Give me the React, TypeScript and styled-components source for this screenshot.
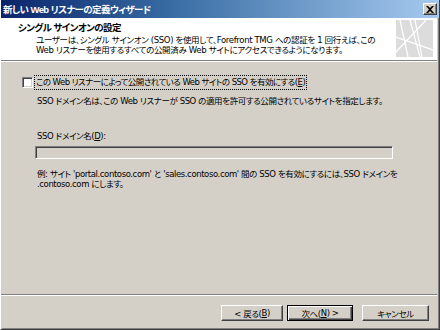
import React from 'react';
import styled, { createGlobalStyle } from 'styled-components';

const GlobalStyle = createGlobalStyle`
  html, body {
    margin: 0;
    padding: 0;
    background: #d4d0c8;
  }
  body {
    font-family: "DejaVu Sans", "Noto Sans CJK JP", sans-serif;
    font-size: 8.5px;
    letter-spacing: -0.4px;
    color: #000;
    font-feature-settings: "palt";
    white-space: nowrap;
  }
`;

const Window = styled.div`
  width: 440px;
  height: 330px;
  box-sizing: border-box;
  display: flex;
  flex-direction: column;
  background: #d4d0c8;
  border-left: 1px solid #fff;
  border-right: 1px solid #404040;
  border-bottom: 1px solid #404040;
  box-shadow: inset 1px 0 0 #d4d0c8, inset -1px -1px 0 #808080;
  overflow: hidden;
`;

const TitleBar = styled.div`
  height: 18px;
  flex: 0 0 18px;
  margin-left: -1px;
  margin-right: -1px;
  display: flex;
  align-items: center;
  justify-content: space-between;
  padding: 0 3px 0 3px;
  background: linear-gradient(to right, #0a246a 0%, #3a6ea5 40%, #a6caf0 100%);
`;

const TitleText = styled.span`
  color: #fff;
  font-family: "Liberation Sans", "Noto Sans CJK JP", sans-serif;
  font-weight: bold;
  font-size: 9.5px;
  letter-spacing: -0.6px;
`;

const CloseButton = styled.div`
  width: 14px;
  height: 12px;
  box-sizing: border-box;
  background: #d4d0c8;
  border-top: 1px solid #fff;
  border-left: 1px solid #fff;
  border-right: 1px solid #404040;
  border-bottom: 1px solid #404040;
  box-shadow: inset -1px -1px 0 #808080;
  display: flex;
  align-items: center;
  justify-content: center;
`;

const Header = styled.div`
  height: 42px;
  flex: 0 0 42px;
  background: #fff;
  display: flex;
  align-items: flex-start;
  justify-content: space-between;
  padding: 0 4px 0 17px;
  margin-right: 2px;
  border-bottom: 1px solid #808080;
  box-shadow: 0 1px 0 #fff;
`;

const HeaderText = styled.div`
  padding-top: 4px;
`;

const HeaderTitle = styled.div`
  font-family: "Liberation Sans", "Noto Sans CJK JP", sans-serif;
  font-weight: bold;
  font-size: 9.5px;
  letter-spacing: -0.6px;
  line-height: 11px;
`;

const HeaderDesc = styled.div`
  padding-left: 18px;
  line-height: 10px;
  margin-top: 2px;
  letter-spacing: -0.35px;
`;

const HeaderIcon = styled.svg`
  margin-top: 2px;
  flex: 0 0 auto;
`;

const Content = styled.div`
  flex: 1;
  display: flex;
  flex-direction: column;
  padding: 14px 0 0 19px;
`;

const CheckRow = styled.label`
  display: flex;
  align-items: center;
  gap: 1px;
`;

const CheckBox = styled.span`
  width: 11px;
  height: 11px;
  box-sizing: border-box;
  background: #fff;
  border-top: 1px solid #808080;
  border-left: 1px solid #808080;
  border-right: 1px solid #fff;
  border-bottom: 1px solid #fff;
  box-shadow: inset 1px 1px 0 #404040, inset -1px -1px 0 #d4d0c8;
  margin-left: 2px;
`;

const FocusLabel = styled.span`
  border: 1px dotted #000;
  padding: 1px 1px;
  line-height: 11px;
  letter-spacing: -0.55px;
`;

const Indented = styled.div<{ $top: number }>`
  padding-left: 17px;
  margin-top: ${(p) => p.$top}px;
  line-height: 10px;
`;

const DomainInput = styled.div`
  margin: 5px 0 0 15px;
  width: 358px;
  height: 13px;
  box-sizing: border-box;
  border-top: 1px solid #808080;
  border-left: 1px solid #808080;
  border-right: 1px solid #fff;
  border-bottom: 1px solid #fff;
  box-shadow: inset 1px 1px 0 #404040, inset -1px -1px 0 #d4d0c8;
  background: #d4d0c8;
`;

const Footer = styled.div`
  flex: 0 0 auto;
  border-top: 1px solid #808080;
  box-shadow: inset 0 1px 0 #fff;
  margin-right: 2px;
  padding: 10px 8px 8px 0;
  display: flex;
  justify-content: flex-end;
  align-items: center;
`;

const Button = styled.div<{ $w: number; $default?: boolean; $gap?: number }>`
  width: ${(p) => p.$w}px;
  height: 16px;
  box-sizing: border-box;
  margin-left: ${(p) => p.$gap ?? 0}px;
  display: flex;
  align-items: center;
  justify-content: center;
  background: #d4d0c8;
  border-top: 1px solid ${(p) => (p.$default ? '#000' : '#fff')};
  border-left: 1px solid ${(p) => (p.$default ? '#000' : '#fff')};
  border-right: 1px solid ${(p) => (p.$default ? '#000' : '#404040')};
  border-bottom: 1px solid ${(p) => (p.$default ? '#000' : '#404040')};
  box-shadow: ${(p) =>
    p.$default
      ? 'inset 1px 1px 0 #fff, inset -1px -1px 0 #404040, inset -2px -2px 0 #808080'
      : 'inset -1px -1px 0 #808080'};
`;

const Underline = styled.span`
  text-decoration: underline;
`;

export default function App() {
  return (
    <>
      <GlobalStyle />
      <Window>
        <TitleBar>
          <TitleText>新しい Web リスナーの定義ウィザード</TitleText>
          <CloseButton>
            <svg width="8" height="7" viewBox="0 0 8 7">
              <path d="M0 0h2l2 2 2-2h2L5 3.5 8 7H6L4 5 2 7H0l3-3.5z" fill="#000" />
            </svg>
          </CloseButton>
        </TitleBar>
        <Header>
          <HeaderText>
            <HeaderTitle>シングル サインオンの設定</HeaderTitle>
            <HeaderDesc>
              ユーザーは、シングル サインオン (SSO) を使用して、Forefront TMG への認証を 1 回行えば、この
              <br />
              Web リスナーを使用するすべての公開済み Web サイトにアクセスできるようになります。
            </HeaderDesc>
          </HeaderText>
          <HeaderIcon width="37" height="37" viewBox="0 0 37 37">
            <rect width="37" height="37" fill="#dcdcdc" />
            <g stroke="#fff" strokeWidth="1.2" fill="none">
              <path d="M4 0 L12 37" />
              <path d="M14 0 L24 37" />
              <path d="M19 0 L26 37" />
              <path d="M0 17 L37 30" />
              <path d="M0 32 L30 0" />
            </g>
          </HeaderIcon>
        </Header>
        <Content>
          <CheckRow>
            <CheckBox />
            <FocusLabel>
              この Web リスナーによって公開されている Web サイトの SSO を有効にする(<Underline>E</Underline>)
            </FocusLabel>
          </CheckRow>
          <Indented $top={6}>
            SSO ドメイン名は、この Web リスナーが SSO の適用を許可する公開されているサイトを指定します。
          </Indented>
          <Indented $top={25}>
            SSO ドメイン名(<Underline>D</Underline>):
          </Indented>
          <DomainInput />
          <Indented $top={10}>
            例: サイト 'portal.contoso.com' と 'sales.contoso.com' 間の SSO を有効にするには、SSO ドメインを
            <br />
            .contoso.com にします。
          </Indented>
        </Content>
        <Footer>
          <Button $w={62}>
            &lt; 戻る(<Underline>B</Underline>)
          </Button>
          <Button $w={66} $gap={4} $default>
            次へ(<Underline>N</Underline>) &gt;
          </Button>
          <Button $w={67} $gap={9}>
            キャンセル
          </Button>
        </Footer>
      </Window>
    </>
  );
}
